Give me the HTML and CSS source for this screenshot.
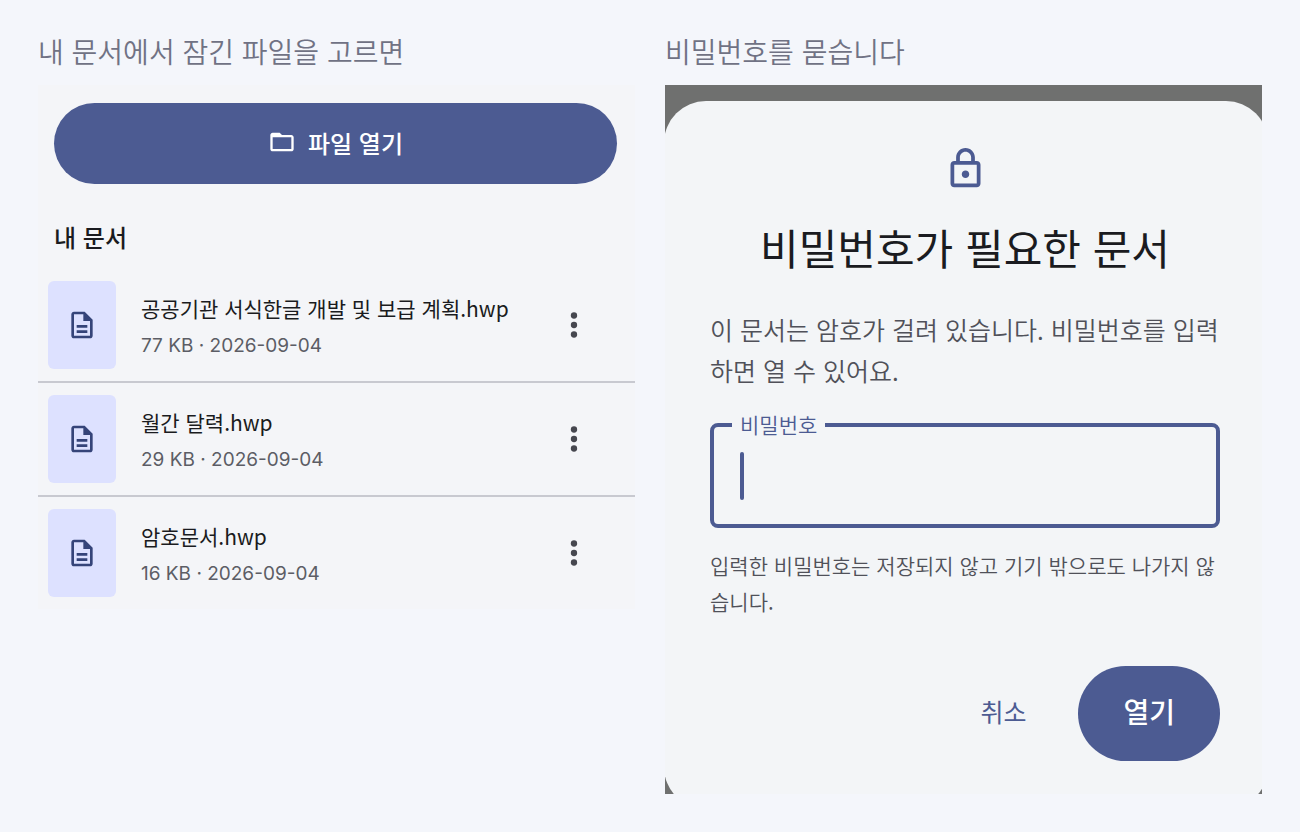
FILE: index.html
```html
<!DOCTYPE html>
<html lang="ko">
<head>
    <meta charset="UTF-8">
    <meta name="viewport" content="width=device-width, initial-scale=1.0">
    <title>잠긴 문서 열기</title>
    <link rel="stylesheet" href="styles.css">
</head>
<body>
    <!-- shared icons -->
    <svg class="sprite" aria-hidden="true">
        <symbol id="icon-doc" viewBox="0 0 24 24">
            <path d="M8 16h8v2H8zm0-4h8v2H8zm6-10H6c-1.1 0-2 .9-2 2v16c0 1.1.89 2 1.99 2H18c1.1 0 2-.9 2-2V8l-6-6zm4 18H6V4h7v5h5v11z"/>
        </symbol>
        <symbol id="icon-more" viewBox="0 0 24 24">
            <circle cx="12" cy="6" r="2"/>
            <circle cx="12" cy="12" r="2"/>
            <circle cx="12" cy="18" r="2"/>
        </symbol>
    </svg>

    <main class="board">
        <section class="step">
            <h2 class="caption">내 문서에서 잠긴 파일을 고르면</h2>
            <div class="files">
                <button class="open-btn" type="button">
                    <svg class="folder-icon" viewBox="0 0 24 24" aria-hidden="true">
                        <path d="M20 6h-8l-2-2H4c-1.1 0-1.99.9-1.99 2L2 18c0 1.1.9 2 2 2h16c1.1 0 2-.9 2-2V8c0-1.1-.9-2-2-2zm0 12H4V8h16v10z"/>
                    </svg>
                    파일 열기
                </button>

                <h3 class="files-title">내 문서</h3>
                <ul class="file-list">
                    <li class="file">
                        <span class="thumb"><svg><use href="#icon-doc"/></svg></span>
                        <div class="file-text">
                            <p class="file-name">공공기관 서식한글 개발 및 보급 계획.hwp</p>
                            <p class="file-meta">77 KB · 2026-09-04</p>
                        </div>
                        <button class="more-btn" type="button" aria-label="더보기"><svg><use href="#icon-more"/></svg></button>
                    </li>
                    <li class="file">
                        <span class="thumb"><svg><use href="#icon-doc"/></svg></span>
                        <div class="file-text">
                            <p class="file-name">월간 달력.hwp</p>
                            <p class="file-meta">29 KB · 2026-09-04</p>
                        </div>
                        <button class="more-btn" type="button" aria-label="더보기"><svg><use href="#icon-more"/></svg></button>
                    </li>
                    <li class="file">
                        <span class="thumb"><svg><use href="#icon-doc"/></svg></span>
                        <div class="file-text">
                            <p class="file-name">암호문서.hwp</p>
                            <p class="file-meta">16 KB · 2026-09-04</p>
                        </div>
                        <button class="more-btn" type="button" aria-label="더보기"><svg><use href="#icon-more"/></svg></button>
                    </li>
                </ul>
            </div>
        </section>

        <section class="step">
            <h2 class="caption">비밀번호를 묻습니다</h2>
            <div class="scrim">
                <form class="dialog">
                    <svg class="lock-icon" viewBox="0 0 24 24" aria-hidden="true">
                        <path d="M18 8h-1V6c0-2.76-2.24-5-5-5S7 3.24 7 6v2H6c-1.1 0-2 .9-2 2v10c0 1.1.9 2 2 2h12c1.1 0 2-.9 2-2V10c0-1.1-.9-2-2-2zM9 6c0-1.66 1.34-3 3-3s3 1.34 3 3v2H9V6zm9 14H6V10h12v10zm-6-3c1.1 0 2-.9 2-2s-.9-2-2-2-2 .9-2 2 .9 2 2 2z"/>
                    </svg>
                    <h3 class="dialog-title">비밀번호가 필요한 문서</h3>
                    <p class="dialog-text">이 문서는 암호가 걸려 있습니다. 비밀번호를 입력하면 열 수 있어요.</p>
                    <fieldset class="field">
                        <legend><label for="password">비밀번호</label></legend>
                        <input id="password" type="password" aria-describedby="hint">
                        <span class="caret"></span>
                    </fieldset>
                    <p class="hint" id="hint">입력한 비밀번호는 저장되지 않고 기기 밖으로도 나가지 않습니다.</p>
                    <div class="actions">
                        <button class="cancel-btn" type="button">취소</button>
                        <button class="confirm-btn" type="button">열기</button>
                    </div>
                </form>
            </div>
        </section>
    </main>
</body>
</html>
```
FILE: styles.css
```css
* {
    margin: 0;
    padding: 0;
    box-sizing: border-box;
}

body {
    font-family: 'Noto Sans CJK KR', sans-serif;
    background: #f4f6fb;
    color: #1a1b20;
}

button,
input {
    font-family: inherit;
    border: none;
    background: transparent;
}

button {
    cursor: pointer;
}

svg {
    fill: currentColor;
    flex-shrink: 0;
}

.sprite {
    display: none;
}

.board {
    display: grid;
    grid-template-columns: 1fr 1fr;
    gap: 30px;
    align-items: start;
    padding: 31px 38px;
}

.caption {
    margin-bottom: 14px;
    font-size: 28px;
    font-weight: 350;
    line-height: 40px;
    color: #707284;
}

/* file list */
.files {
    padding-top: 18px;
    background: #f4f5f8;
}

.open-btn {
    display: flex;
    align-items: center;
    justify-content: center;
    gap: 12px;
    width: calc(100% - 34px);
    height: 81px;
    margin: 0 18px 0 16px;
    padding-bottom: 3px;
    border-radius: 41px;
    background: #4c5b92;
    color: #fff;
    font-size: 24px;
    font-weight: 500;
}

.folder-icon {
    width: 28px;
    height: 28px;
}

.files-title {
    margin: 36px 16px 15px;
    font-size: 24px;
    font-weight: 500;
    line-height: 34px;
}

.file-list {
    list-style: none;
}

.file {
    display: flex;
    align-items: center;
    padding: 12px 42px 12px 10px;
}

.file + .file {
    border-top: 2px solid #c8c9d0;
}

.thumb {
    display: flex;
    align-items: center;
    justify-content: center;
    width: 68px;
    height: 88px;
    margin-right: 25px;
    border-radius: 6px;
    background: #dde1ff;
    color: #354479;
}

.thumb svg {
    width: 32px;
    height: 32px;
}

.file-text {
    flex: 1;
    padding-top: 4px;
}

.file-name {
    font-size: 21px;
    font-weight: 400;
    line-height: 38px;
}

.file-meta {
    font-family: Inter, 'Noto Sans CJK KR', sans-serif;
    font-size: 19px;
    line-height: 38px;
    color: #5c5d65;
}

.more-btn {
    display: flex;
    color: #46474f;
}

.more-btn svg {
    width: 38px;
    height: 38px;
}

/* password dialog */
.scrim {
    overflow: hidden;
    background: #6f706f;
}

/* the sheet runs a little past the scrim and gets clipped */
.dialog {
    display: flex;
    flex-direction: column;
    margin: 16px -6px -15px -1px;
    padding: 45px 48px 48px 46px;
    border-radius: 42px;
    background: #f3f5f7;
}

.lock-icon {
    align-self: center;
    width: 45px;
    height: 45px;
    color: #4c5b92;
}

.dialog-title {
    margin: 28px 0 34px;
    font-size: 42px;
    font-weight: 400;
    line-height: 56px;
    text-align: center;
}

.dialog-text {
    font-size: 25px;
    font-weight: 350;
    line-height: 41px;
    color: #505159;
}

.field {
    position: relative;
    margin: 17px 0 19px;
    padding: 0 26px;
    border: 4px solid #4c5b92;
    border-radius: 8px;
    color: #4c5b92;
}

.field legend {
    margin-left: -8px;
    padding: 0 8px 2px;
    font-size: 21px;
    font-weight: 350;
    line-height: 32px;
}

.field input {
    display: block;
    width: 100%;
    height: 82px;
    outline: none;
    font-size: 28px;
}

.caret {
    position: absolute;
    left: 26px;
    bottom: 24px;
    width: 4px;
    height: 48px;
    border-radius: 2px;
    background: #4c5b92;
}

.hint {
    font-size: 21px;
    font-weight: 350;
    line-height: 36px;
    color: #505159;
}

.actions {
    display: flex;
    justify-content: flex-end;
    gap: 24px;
    margin-top: 47px;
}

.cancel-btn {
    padding: 0 28px 6px;
    color: #4c5b92;
    font-size: 25px;
    font-weight: 400;
}

.confirm-btn {
    height: 95px;
    padding: 0 45px 6px;
    border-radius: 48px;
    background: #4c5b92;
    color: #fff;
    font-size: 28px;
    font-weight: 500;
}

@media (max-width: 900px) {
    .board {
        grid-template-columns: 1fr;
    }
}
```
